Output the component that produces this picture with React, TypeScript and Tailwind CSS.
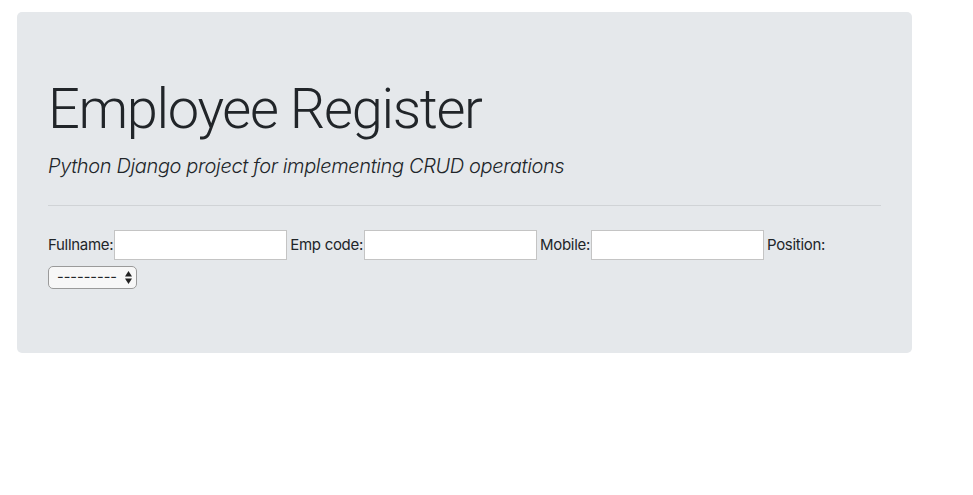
export default function App() {
  const fields = [
    { label: "Fullname:", name: "fullname" },
    { label: "Emp code:", name: "emp_code" },
    { label: "Mobile:", name: "mobile" },
  ];

  return (
    <div className="min-h-screen bg-white pt-[12px] pl-[17px] text-[#212529] [font-family:Inter,'Liberation_Sans',sans-serif]">
      <div className="w-[895px] rounded-[5px] bg-[#e5e8eb] px-[31px] py-[64px]">
        <h1 className="text-[56px] font-light leading-[67px] tracking-[-0.024em] mb-[8px] [font-family:Roboto,Inter,sans-serif]">Employee Register</h1>
        <p className="text-[20px] font-light italic leading-[30px] tracking-[-0.018em]">
          Python Django project for implementing CRUD operations
        </p>
        <hr className="mt-[24px] mb-[24px] border-t border-[#d0d3d6]" />
        <form className="flex flex-wrap items-center gap-x-[3px] gap-y-[6px] text-[15px]">
          {fields.map((f) => (
            <div key={f.name} className="flex items-center">
              <label htmlFor={f.name} className="tracking-[-0.02em]">{f.label}</label>
              <input
                id={f.name}
                type="text"
                className="ml-[1px] h-[30px] w-[173px] border border-[#c4c4c4] bg-white px-1 outline-none"
              />
            </div>
          ))}
          <label htmlFor="position" className="tracking-[-0.02em]">Position:</label>
          <div className="relative">
            <select
              id="position"
              className="h-[23px] w-[89px] appearance-none rounded-[5px] border border-[#9a9a9a] bg-[#f7f7f7] pl-[8px] text-[14.5px] leading-none outline-none"
            >
              <option>---------</option>
            </select>
            <svg className="pointer-events-none absolute right-[5px] top-[5px]" width="7" height="13" viewBox="0 0 7 13">
              <path d="M3.5 0 L7 5.5 L0 5.5 Z" fill="#222" />
              <path d="M0 7.5 L7 7.5 L3.5 13 Z" fill="#222" />
            </svg>
          </div>
        </form>
      </div>
    </div>
  );
}
